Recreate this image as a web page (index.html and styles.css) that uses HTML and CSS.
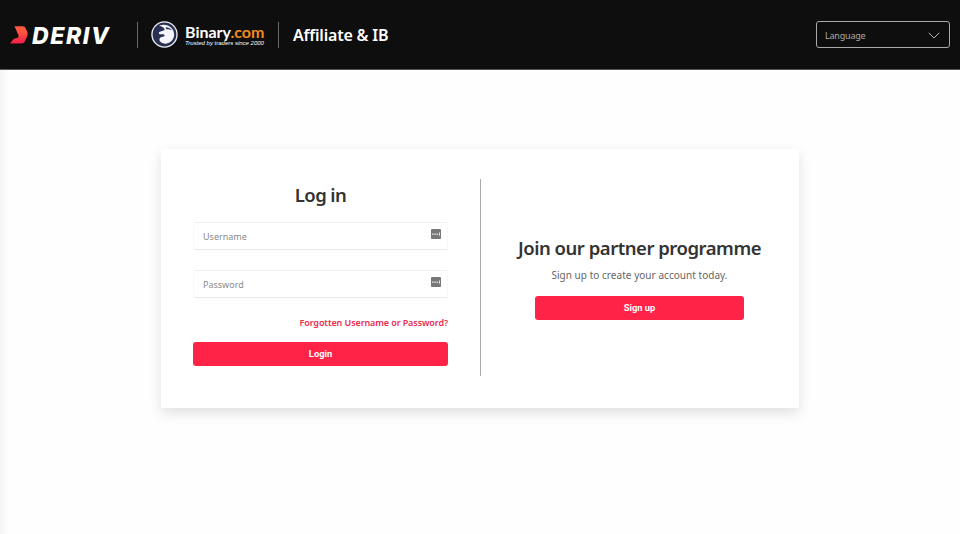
FILE: index.html
```
<!DOCTYPE html>
<html lang="en">
<head>
<meta charset="utf-8">
<title>Affiliate &amp; IB - Log in</title>
<link rel="stylesheet" href="styles.css">
</head>
<body>
<header class="header">
  <a class="deriv">
    <svg class="deriv-mark" viewBox="0 0 19 18" width="19" height="18">
      <defs><linearGradient id="flame" x1="0" y1="0" x2="0" y2="1"><stop offset="0.3" stop-color="#ff5640"/><stop offset="1" stop-color="#f51c4c"/></linearGradient></defs>
      <path fill="url(#flame)" d="M4.500.3h8.500q1.800 0 2.500 1.600l2 4.700q.5 1.500-.1 3l-2.300 5.300Q14 17.500 11.300 17.500H0l3-3.800q.8-1 2-1.300l2.200-.4q1.900-.5 1.300-2.500-.2-1-1-2.600z"/>
    </svg>
    <span class="deriv-name">DERIV</span>
  </a>
  <a class="binary">
    <svg class="binary-mark" viewBox="0 0 27 27" width="27" height="27">
      <circle cx="13.500" cy="13.500" r="13.200" fill="#f4f5fa"/>
      <circle cx="13.500" cy="13.500" r="11.900" fill="#2a3052"/>
      <path fill="#f4f5fa" d="M8 4.500c5-1.800 10-.8 13 3 3.200 4 2.800 9.500-.8 12.800-3.300 3-8.200 3.200-11 .3-.9-1.200-1-2.600-.2-3.600 1-1.200 2.600-.9 3.900-1.500 1.100-.6.900-2-.4-2.300-1.600-.3-2.900.5-4.200-.2-.8-.5-.6-1.300.1-1.900 1.400-1.200 4-1 5.300-2.100C13.300 6.300 11 5.700 8 4.500z"/>
      <path fill="#2a3052" d="M14.500 6.200c3 .2 5.500 1.300 7.100 3.100-2.300-1-4.300-1.200-6.300-1.100z"/>
    </svg>
    <span class="binary-text">
      <span class="binary-name">Binary<span class="dotcom">.com</span></span>
      <span class="tagline">Trusted by traders since 2000</span>
    </span>
  </a>
  <span class="section">Affiliate &amp; IB</span>
  <div class="language">
    <span>Language</span>
    <svg viewBox="0 0 12 7" width="12" height="7" fill="none" stroke="#b5b5b5"><path d="M.8.8 6 6 11.200.8"/></svg>
  </div>
</header>
<main class="card">
  <form class="login">
    <h1 class="title login-title">Log in</h1>
    <div class="field"><span class="username">Username</span>
      <svg viewBox="0 0 10 10" width="10" height="10"><rect width="10" height="10" rx="1" fill="#777"/><path fill="#fff" d="M1.200 4.500h1.300v1.300H1.200zm2.200 0h1.300v1.300H3.400zm2.200 0h1.300v1.300H5.600zM8 3.400h.8v3.300H8z"/></svg>
    </div>
    <div class="field"><span class="password">Password</span>
      <svg viewBox="0 0 10 10" width="10" height="10"><rect width="10" height="10" rx="1" fill="#777"/><path fill="#fff" d="M1.200 4.500h1.300v1.300H1.200zm2.200 0h1.300v1.300H3.400zm2.200 0h1.300v1.300H5.600zM8 3.400h.8v3.300H8z"/></svg>
    </div>
    <a class="forgot">Forgotten Username or Password?</a>
    <button class="button" type="button">Login</button>
  </form>
  <section class="join">
    <h2 class="title join-title">Join our partner programme</h2>
    <p class="intro">Sign up to create your account today.</p>
    <button class="button signup" type="button">Sign up</button>
  </section>
</main>
</body>
</html>
```
FILE: styles.css
```
* { box-sizing: border-box; }
body {
  margin: 0;
  height: 534px;
  overflow: hidden;
  background: linear-gradient(90deg, #f5f5f5, #fefefe 10px);
  font-family: "Noto Sans", sans-serif;
}
.header {
  display: flex;
  align-items: center;
  height: 70px;
  padding: 0 10px 0 10px;
  background: #0e0e0e;
  border-bottom: 1px solid #555;
  color: #fff;
}
.deriv {
  display: flex;
  align-items: center;
  width: 128px;
  height: 26px;
  border-right: 1px solid #6a6a6a;
}
.deriv-mark { flex: none; }
.deriv-name {
  margin-left: 3px;
  padding-top: 2px;
  font: italic 800 23px/26px Inter, sans-serif;
  letter-spacing: 1.6px;
}
.binary {
  display: flex;
  align-items: center;
  width: 141px;
  height: 26px;
  padding-left: 13px;
  border-right: 1px solid #6a6a6a;
}
.binary-mark { flex: none; }
.binary-text {
  display: flex;
  flex-direction: column;
  margin-left: 7px;
  padding-top: 1px;
  white-space: nowrap;
}
.binary-name { font: 700 16px/15px Lato, sans-serif; }
.dotcom { color: #f08a20; }
.tagline { font: italic 6px/8px "Liberation Sans", sans-serif; }
.section { margin-left: 14px; font-size: 16px; font-weight: 600; line-height: 24px; letter-spacing: -0.2px; }
.language {
  display: flex;
  align-items: center;
  justify-content: space-between;
  width: 134px;
  height: 27px;
  margin-left: auto;
  padding: 1px 9px 0 8px;
  border: 1px solid #aaa;
  border-radius: 3px;
  color: #aaa;
  font-size: 9px;
  letter-spacing: -0.2px;
}
.card {
  display: flex;
  align-items: center;
  width: 638px;
  height: 259px;
  margin: 79px auto 0 161px;
  padding-bottom: 2px;
  background: #fff;
  box-shadow: 0 5px 12px rgba(0, 0, 0, 0.12);
}
.login {
  display: flex;
  flex-direction: column;
  width: 320px;
  height: 197px;
  padding: 0 32px;
  border-right: 1px solid #aaa;
}
.title { margin: 0; color: #333; font-weight: 600; white-space: nowrap; }
.login-title { height: 43px; text-align: center; font-size: 18.500px; line-height: 32px; letter-spacing: -0.6px; }
.field {
  display: flex;
  justify-content: space-between;
  height: 28px;
  margin-bottom: 20px;
  padding: 7px 6px 0 9px;
  border: 1px solid #f8f8f8;
  border-top-color: #f0f0f0;
  border-bottom-color: #e9e9e9;
  border-radius: 2px;
  color: #8a8a8a;
  font-size: 9px;
  line-height: 13px;
}
.field svg { margin-top: -1px; }
.forgot { align-self: flex-end; height: 24px; color: #e92c50; font-size: 9px; font-weight: 600; line-height: 10px; letter-spacing: -0.1px; white-space: nowrap; }
.button {
  width: 255px;
  height: 24px;
  flex: none;
  padding: 0;
  border: 0;
  border-radius: 3px;
  background: #ff2447;
  color: #fff;
  font: 700 9.300px/24px Roboto, sans-serif;
}
.join { display: flex; flex: 1; flex-direction: column; align-items: center; padding: 1px 1px 0 0; }
.join-title { font-size: 18.500px; line-height: 24px; letter-spacing: -0.48px; }
.intro { margin: 8px 0 13px; color: #666; font-size: 10px; line-height: 15px; letter-spacing: 0.04px; }
.signup { width: 209px; }
```
